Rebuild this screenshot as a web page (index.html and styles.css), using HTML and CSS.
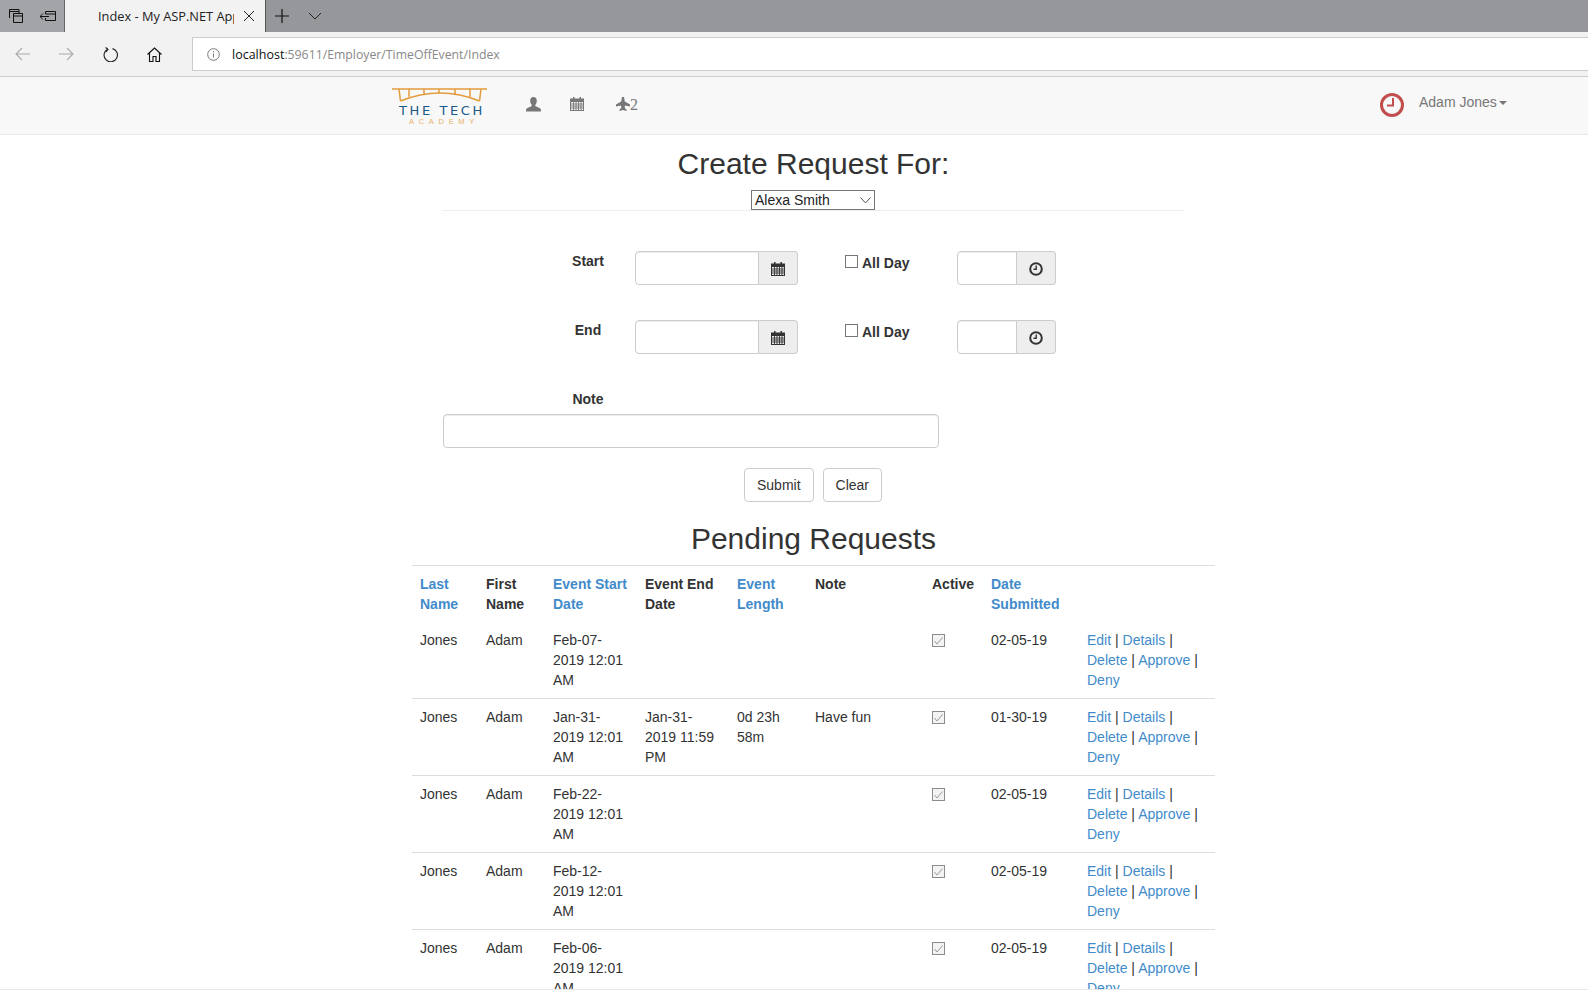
FILE: index.html
```html
<!DOCTYPE html>
<html lang="en">
<head>
<meta charset="utf-8">
<title>Index - My ASP.NET App</title>
<link rel="stylesheet" href="styles.css">
</head>
<body>
<div class="tabbar">
  <div class="tab-tools">
    <svg width="14" height="14" viewBox="0 0 14 14"><path d="M.5 9V.5H10V4M0 2.500h10M4.500 4.500h9v9h-9zM4.500 7h9" fill="none" stroke="#111"/></svg>
    <svg width="16" height="10" viewBox="0 0 16 10"><path d="M5.500 3V.5h10v9h-10V7M5.500 3h10M0 5.500h9M3 2.500l-3 3 3 3" fill="none" stroke="#111"/></svg>
  </div>
  <div class="tab">
    <span class="tab-title">Index - My ASP.NET App</span>
    <svg width="12" height="12" viewBox="0 0 12 12"><path d="M1 1l10 10M11 1L1 11" stroke="#222" stroke-width="1" fill="none"/></svg>
  </div>
  <div class="tab-actions">
    <svg width="14" height="14" viewBox="0 0 14 14"><path d="M7 0v14M0 7h14" stroke="#111" stroke-width="1.200" fill="none"/></svg>
    <svg width="14" height="8" viewBox="0 0 14 8"><path d="M1 1l6 6 6-6" stroke="#222" stroke-width="1" fill="none"/></svg>
  </div>
</div>
<div class="toolbar">
  <div class="nav-buttons">
    <svg width="15" height="14" viewBox="0 0 15 14"><path d="M15 7H1M7 1L1 7l6 6" stroke="#aaa" stroke-width="1.100" fill="none"/></svg>
    <svg width="15" height="14" viewBox="0 0 15 14"><path d="M0 7h14M8 1l6 6-6 6" stroke="#aaa" stroke-width="1.100" fill="none"/></svg>
    <svg width="15" height="15" viewBox="0 0 15 15"><path d="M4.500 2.200A6.700 6.700 0 1 0 9.500 1.600M2.600.5L5 2.400 3 4.800" stroke="#222" stroke-width="1.100" fill="none"/></svg>
    <svg width="15" height="15" viewBox="0 0 15 15"><path d="M.5 7.500L7.500 1l7 6.500M2.500 6v8.500h3.500v-5h3v5h3.500V6" stroke="#111" stroke-width="1.100" fill="none"/></svg>
  </div>
  <div class="address">
    <svg width="13" height="13" viewBox="0 0 13 13"><circle cx="6.500" cy="6.500" r="5.800" fill="none" stroke="#777"/><path d="M6.500 5.500v4M6.500 3v1.300" stroke="#777"/></svg>
    <span class="url"><span class="host">localhost</span>:59611/Employer/TimeOffEvent/Index</span>
  </div>
</div>
<header class="navbar">
  <div class="logo">
    <svg class="bridge" width="95" height="16" viewBox="0 0 95 16"><path d="M0 1h95M7 1l1.500 12M89 1l-1.500 12M8.500 13Q48-3 87.500 13M17 1v7.800M32 1v5M47 1v4M63 1v5M78 1v7.800" fill="none" stroke="#e39b3c" stroke-width="1.500"/></svg>
    <span class="logo-main">THE TECH</span>
    <span class="logo-sub">ACADEMY</span>
  </div>
  <nav class="nav-icons">
    <svg width="15" height="15" viewBox="0 0 15 15"><path d="M7.500 0C5.300 0 4.200 1.700 4.200 3.800c0 1.800.7 3.200 1.500 4.100v1.200L1 11.200C.2 11.600 0 13 0 14.500h15c0-1.500-.2-2.900-1-3.300L9.300 9.100V7.900c.8-.9 1.500-2.300 1.500-4.100C10.800 1.700 9.700 0 7.500 0z" fill="#777"/></svg>
    <svg width="14" height="14" viewBox="0 0 14 14"><path d="M3 0h1.500v1.500h5V0H11v1.500h3V14H0V1.500h3zM1 5v8h12V5z" fill="#777"/><path d="M1 7h12M1 9h12M1 11h12M3.500 5v8M6 5v8M8.500 5v8M11 5v8" stroke="#777" stroke-width=".9"/></svg>
    <span class="plane-group">
      <svg width="14" height="14" viewBox="0 0 14 14"><path d="M6 0h2l.8 4.500L14 7.500v2L9 8.500l-.3 2.500 1.800 1.500V14L7 13l-3.500 1v-1.500L5.300 11 5 8.500 0 9.500v-2l5.200-3z" fill="#777"/></svg>
      <span class="plane-count">2</span>
    </span>
  </nav>
  <div class="nav-user">
    <svg class="clock" width="24" height="24" viewBox="0 0 24 24"><circle cx="12" cy="12" r="10.500" fill="none" stroke="#c14d4d" stroke-width="3"/><path d="M13 5v7.500H7" fill="none" stroke="#c14d4d" stroke-width="2"/></svg>
    <span class="user-name">Adam Jones</span><span class="caret"></span>
  </div>
</header>
<main class="page">
  <section class="request">
    <h1 class="title">Create Request For:</h1>
    <div class="employee-row">
      <div class="select">
        <span>Alexa Smith</span>
        <svg width="11" height="7" viewBox="0 0 11 7"><path d="M.5.500L5.500 6l5-5.500" fill="none" stroke="#555"/></svg>
      </div>
    </div>
    <hr class="rule">
    <form class="times">
      <label class="time-label">Start</label>
      <div class="group date-group">
        <input class="field" type="text">
        <span class="addon">
          <svg width="14" height="14" viewBox="0 0 14 14"><path d="M3 0h1.500v1.500h5V0H11v1.500h3V14H0V1.500h3zM1 5v8h12V5z" fill="#333"/><path d="M1 7h12M1 9h12M1 11h12M3.500 5v8M6 5v8M8.500 5v8M11 5v8" stroke="#333" stroke-width=".9"/></svg>
        </span>
      </div>
      <label class="allday"><span class="box"></span>All Day</label>
      <div class="group time-group">
        <input class="field" type="text">
        <span class="addon">
          <svg width="14" height="14" viewBox="0 0 14 14"><circle cx="7" cy="7" r="5.800" fill="none" stroke="#333" stroke-width="2"/><path d="M7.200 3.500v3.800H4.500" fill="none" stroke="#333" stroke-width="1.400"/></svg>
        </span>
      </div>
      <label class="time-label">End</label>
      <div class="group date-group">
        <input class="field" type="text">
        <span class="addon">
          <svg width="14" height="14" viewBox="0 0 14 14"><path d="M3 0h1.500v1.500h5V0H11v1.500h3V14H0V1.500h3zM1 5v8h12V5z" fill="#333"/><path d="M1 7h12M1 9h12M1 11h12M3.500 5v8M6 5v8M8.500 5v8M11 5v8" stroke="#333" stroke-width=".9"/></svg>
        </span>
      </div>
      <label class="allday"><span class="box"></span>All Day</label>
      <div class="group time-group">
        <input class="field" type="text">
        <span class="addon">
          <svg width="14" height="14" viewBox="0 0 14 14"><circle cx="7" cy="7" r="5.800" fill="none" stroke="#333" stroke-width="2"/><path d="M7.200 3.500v3.800H4.500" fill="none" stroke="#333" stroke-width="1.400"/></svg>
        </span>
      </div>
    </form>
    <div class="note">
      <label class="time-label note-label">Note</label>
      <input class="field note-field" type="text">
    </div>
    <div class="buttons">
      <button class="btn" type="button">Submit</button>
      <button class="btn" type="button">Clear</button>
    </div>
  </section>
  <h1 class="title pending">Pending Requests</h1>
  <table class="requests">
    <colgroup>
      <col class="c1"><col class="c2"><col class="c3"><col class="c4"><col class="c5"><col class="c6"><col class="c7"><col class="c8"><col class="c9">
    </colgroup>
    <thead>
      <tr>
        <th><a href="#">Last Name</a></th><th>First Name</th><th><a href="#">Event Start Date</a></th><th>Event End Date</th><th><a href="#">Event Length</a></th><th>Note</th><th>Active</th><th><a href="#">Date Submitted</a></th><th></th>
      </tr>
    </thead>
    <tbody>
      <tr class="first">
        <td>Jones</td><td>Adam</td><td>Feb-07-2019 12:01 AM</td><td></td><td></td><td></td><td><span class="check"><svg width="9" height="8" viewBox="0 0 9 8"><path d="M.5 4l2.500 3L8.500.5" fill="none" stroke="#999"/></svg></span></td><td>02-05-19</td>
        <td><a href="#">Edit</a> | <a href="#">Details</a> | <a href="#">Delete</a> | <a href="#">Approve</a> | <a href="#">Deny</a></td>
      </tr>
      <tr>
        <td>Jones</td><td>Adam</td><td>Jan-31-2019 12:01 AM</td><td>Jan-31-2019 11:59 PM</td><td>0d 23h 58m</td><td>Have fun</td><td><span class="check"><svg width="9" height="8" viewBox="0 0 9 8"><path d="M.5 4l2.500 3L8.500.5" fill="none" stroke="#999"/></svg></span></td><td>01-30-19</td>
        <td><a href="#">Edit</a> | <a href="#">Details</a> | <a href="#">Delete</a> | <a href="#">Approve</a> | <a href="#">Deny</a></td>
      </tr>
      <tr>
        <td>Jones</td><td>Adam</td><td>Feb-22-2019 12:01 AM</td><td></td><td></td><td></td><td><span class="check"><svg width="9" height="8" viewBox="0 0 9 8"><path d="M.5 4l2.500 3L8.500.5" fill="none" stroke="#999"/></svg></span></td><td>02-05-19</td>
        <td><a href="#">Edit</a> | <a href="#">Details</a> | <a href="#">Delete</a> | <a href="#">Approve</a> | <a href="#">Deny</a></td>
      </tr>
      <tr>
        <td>Jones</td><td>Adam</td><td>Feb-12-2019 12:01 AM</td><td></td><td></td><td></td><td><span class="check"><svg width="9" height="8" viewBox="0 0 9 8"><path d="M.5 4l2.500 3L8.500.5" fill="none" stroke="#999"/></svg></span></td><td>02-05-19</td>
        <td><a href="#">Edit</a> | <a href="#">Details</a> | <a href="#">Delete</a> | <a href="#">Approve</a> | <a href="#">Deny</a></td>
      </tr>
      <tr>
        <td>Jones</td><td>Adam</td><td>Feb-06-2019 12:01 AM</td><td></td><td></td><td></td><td><span class="check"><svg width="9" height="8" viewBox="0 0 9 8"><path d="M.5 4l2.500 3L8.500.5" fill="none" stroke="#999"/></svg></span></td><td>02-05-19</td>
        <td><a href="#">Edit</a> | <a href="#">Details</a> | <a href="#">Delete</a> | <a href="#">Approve</a> | <a href="#">Deny</a></td>
      </tr>
    </tbody>
  </table>
</main>
<footer class="footer"></footer>
</body>
</html>
```
FILE: styles.css
```css
* { box-sizing: border-box; }
html, body { height: 100%; }
body {
  margin: 0;
  height: 998px;
  overflow: hidden;
  display: flex;
  flex-direction: column;
  background: #fff;
  color: #333;
  font-family: "Liberation Sans", Arial, sans-serif;
  font-size: 14px;
  line-height: 20px;
}
a { color: #428bca; text-decoration: none; }

.tabbar { flex: none; height: 32px; display: flex; background: #96979b; }
.tab-tools { width: 64px; display: flex; align-items: center; gap: 17px; padding-left: 9px; background: #a3a4a7; }
.tab {
  width: 202px; display: flex; align-items: center; padding-left: 33px;
  background: #f2f2f2; border-left: 1px solid #666; border-right: 1px solid #555;
}
.tab-title {
  width: 136px; white-space: nowrap; overflow: hidden; margin-right: 9px;
  font-family: "Open Sans", sans-serif; font-size: 12.800px; color: #222;
}
.tab-actions { display: flex; align-items: center; gap: 19px; padding-left: 9px; }

.toolbar { flex: none; height: 45px; display: flex; align-items: center; background: #f2f2f2; border-bottom: 1px solid #ccc; }
.nav-buttons { width: 192px; display: flex; align-items: center; gap: 29px; padding-left: 15px; }
.address {
  flex: 1; height: 34px; margin-right: -2px; display: flex; align-items: center; gap: 12px; padding-left: 14px;
  background: #fff; border: 1px solid #ccc;
}
.url { margin-top: 2px; font-family: "Open Sans", sans-serif; font-size: 12.270px; color: #888; }
.host { font-size: 12.500px; color: #111; }

.navbar {
  flex: none; height: 58px; position: relative; display: flex; background: #f8f8f8; border-bottom: 1px solid #e7e7e7;
  padding-left: 392px;
}
.logo { width: 95px; position: relative; }
.bridge { position: absolute; left: 0; top: 11px; }
.logo-main, .logo-sub { position: absolute; white-space: nowrap; }
.logo-main { left: 7px; top: 28px; font-family: "DejaVu Sans", sans-serif; font-size: 13px; line-height: 12px; letter-spacing: 2.600px; color: #1a5a88; }
.logo-sub { left: 17px; top: 41px; font-size: 7.500px; line-height: 8px; letter-spacing: 4.700px; color: #e8b06c; }
.nav-icons { display: flex; align-items: flex-start; gap: 29px; padding: 20px 0 0 39px; color: #777; }
.plane-group { display: flex; align-items: flex-start; margin-left: 3px; }
.plane-count { font-family: "Liberation Serif", serif; font-size: 16px; line-height: 16px; margin-top: 0; }
.nav-user { position: absolute; left: 1380px; top: 0; display: flex; align-items: flex-start; color: #777; }
.clock { margin-top: 16px; }
.user-name { margin: 15px 0 0 15px; }
.caret {
  margin: 24px 0 0 2px; width: 0; height: 0;
  border-top: 4px solid #777; border-left: 4px solid transparent; border-right: 4px solid transparent;
}

.page { flex: 1; min-height: 0; overflow: hidden; }
.title { margin: 0; font-size: 30px; font-weight: 400; line-height: 33px; text-align: center; color: #333; }
.request { padding-top: 12px; width: 743px; margin-left: 442px; }
.employee-row { display: flex; justify-content: center; padding-top: 10px; padding-right: 1px; }
.select {
  width: 124px; height: 20px; display: flex; align-items: center; justify-content: space-between; padding: 0 3px;
  background: #fff; border: 1px solid #767676; font-size: 14px; color: #222;
}
.rule { margin: 0; border: 0; border-top: 1px solid #eee; }

.times {
  margin: 40px 0 0 0;
  display: grid; grid-template-columns: 193px 163px 159px 99px; grid-auto-rows: 34px; row-gap: 35px;
}
.time-label { width: 192px; padding-left: 100px; text-align: center; font-weight: 700; line-height: 20px; white-space: nowrap; }
.group { display: flex; height: 34px; }
.field {
  flex: 1; min-width: 0; height: 34px; padding: 6px 12px; border: 1px solid #ccc; background: #fff; outline: 0;
  border-radius: 4px 0 0 4px; box-shadow: inset 0 1px 1px rgba(0,0,0,.075);
  font: 14px "Liberation Sans", sans-serif;
}
.addon {
  width: 39px; flex: none; display: flex; align-items: center; justify-content: center; padding-top: 2px;
  background: #eee; border: 1px solid #ccc; border-left: 0; border-radius: 0 4px 4px 0;
}
.allday { display: flex; align-items: flex-start; padding-left: 47px; font-weight: 700; line-height: 20px; gap: 4px; padding-top: 2px; }
.box { width: 13px; height: 13px; margin-top: 2px; border: 1px solid #767676; background: #fff; }
.note { margin-top: 35px; }
.note-label { display: block; }
.note-field { display: block; margin: 5px 0 0 1px; width: 496px; flex: none; border-radius: 4px; }
.buttons { display: flex; justify-content: center; gap: 9px; margin-top: 20px; padding-right: 1px; }
.btn {
  height: 34px; padding: 6px 12px; background: #fff; border: 1px solid #ccc; border-radius: 4px;
  font: 14px/20px "Liberation Sans", sans-serif; color: #333;
}

.pending { width: 803px; margin: 20px 0 0 412px; padding-bottom: 10px; }
.requests { width: 803px; margin-left: 412px; table-layout: fixed; border-collapse: collapse; border-top: 1px solid #ddd; }
.c1 { width: 66px; } .c2 { width: 67px; } .c3 { width: 92px; } .c4 { width: 92px; } .c5 { width: 78px; }
.c6 { width: 117px; } .c7 { width: 59px; } .c8 { width: 96px; } .c9 { width: 136px; }
.requests th, .requests td { padding: 8px; vertical-align: top; text-align: left; line-height: 20px; }
.requests th { font-weight: 700; }
.requests tbody tr { border-top: 1px solid #ddd; }
.requests tbody tr.first { border-top: 0; }
.check {
  display: flex; align-items: center; justify-content: center; width: 13px; height: 13px; margin-top: 4px;
  background: #f3f3f3; border: 1px solid #8c8c8c;
}
.footer { flex: none; height: 9px; background: #fff; border-top: 1px solid #e7e7e7; }
```
